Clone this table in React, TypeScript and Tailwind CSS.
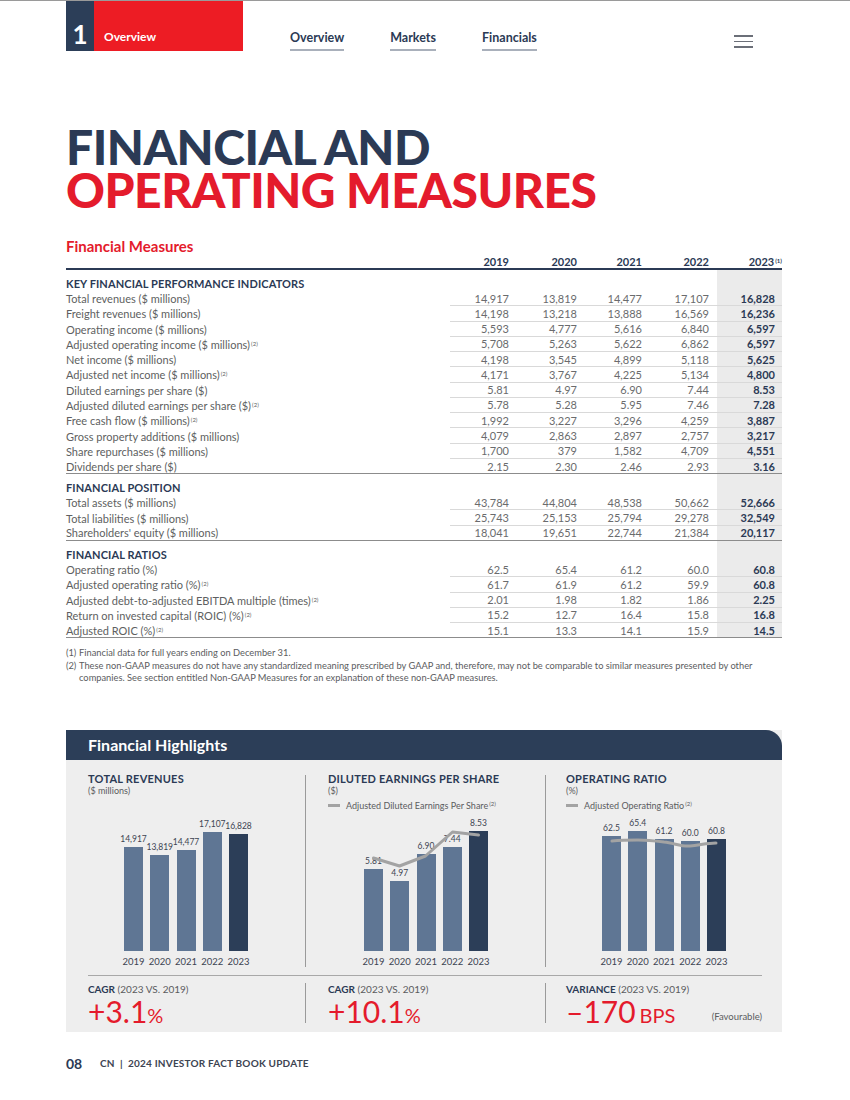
import React from 'react';

type Row = { label: string; note?: boolean; v: string[] };

const sections: { title: string; rows: Row[] }[] = [
  {
    title: 'KEY FINANCIAL PERFORMANCE INDICATORS',
    rows: [
      { label: 'Total revenues ($ millions)', v: ['14,917', '13,819', '14,477', '17,107', '16,828'] },
      { label: 'Freight revenues ($ millions)', v: ['14,198', '13,218', '13,888', '16,569', '16,236'] },
      { label: 'Operating income ($ millions)', v: ['5,593', '4,777', '5,616', '6,840', '6,597'] },
      { label: 'Adjusted operating income ($ millions)', note: true, v: ['5,708', '5,263', '5,622', '6,862', '6,597'] },
      { label: 'Net income ($ millions)', v: ['4,198', '3,545', '4,899', '5,118', '5,625'] },
      { label: 'Adjusted net income ($ millions)', note: true, v: ['4,171', '3,767', '4,225', '5,134', '4,800'] },
      { label: 'Diluted earnings per share ($)', v: ['5.81', '4.97', '6.90', '7.44', '8.53'] },
      { label: 'Adjusted diluted earnings per share ($)', note: true, v: ['5.78', '5.28', '5.95', '7.46', '7.28'] },
      { label: 'Free cash flow ($ millions)', note: true, v: ['1,992', '3,227', '3,296', '4,259', '3,887'] },
      { label: 'Gross property additions ($ millions)', v: ['4,079', '2,863', '2,897', '2,757', '3,217'] },
      { label: 'Share repurchases ($ millions)', v: ['1,700', '379', '1,582', '4,709', '4,551'] },
      { label: 'Dividends per share ($)', v: ['2.15', '2.30', '2.46', '2.93', '3.16'] },
    ],
  },
  {
    title: 'FINANCIAL POSITION',
    rows: [
      { label: 'Total assets ($ millions)', v: ['43,784', '44,804', '48,538', '50,662', '52,666'] },
      { label: 'Total liabilities ($ millions)', v: ['25,743', '25,153', '25,794', '29,278', '32,549'] },
      { label: "Shareholders' equity ($ millions)", v: ['18,041', '19,651', '22,744', '21,384', '20,117'] },
    ],
  },
  {
    title: 'FINANCIAL RATIOS',
    rows: [
      { label: 'Operating ratio (%)', v: ['62.5', '65.4', '61.2', '60.0', '60.8'] },
      { label: 'Adjusted operating ratio (%)', note: true, v: ['61.7', '61.9', '61.2', '59.9', '60.8'] },
      { label: 'Adjusted debt-to-adjusted EBITDA multiple (times)', note: true, v: ['2.01', '1.98', '1.82', '1.86', '2.25'] },
      { label: 'Return on invested capital (ROIC) (%)', note: true, v: ['15.2', '12.7', '16.4', '15.8', '16.8'] },
      { label: 'Adjusted ROIC (%)', note: true, v: ['15.1', '13.3', '14.1', '15.9', '14.5'] },
    ],
  },
];

const colWidths = ['w-[59px]', 'w-[68px]', 'w-[65px]', 'w-[67px]'];
const years = ['2019', '2020', '2021', '2022', '2023'];

const Sup = ({ n }: { n: string }) => (
  <sup className="ml-[1px] text-[6px]">({n})</sup>
);

const TableRow = ({ row, last }: { row: Row; last: boolean }) => (
  <div className={`flex h-[15.27px] items-center ${last ? 'border-b border-[#8c8c8c]' : ''}`}>
    <div className="w-[384px] shrink-0 text-[#5e5f61]">
      {row.label}
      {row.note && <Sup n="2" />}
    </div>
    <div className={`flex h-full flex-1 items-center ${last ? '' : 'border-b border-[#d9d9d9]'}`}>
      {row.v.slice(0, 4).map((x, i) => (
        <div key={i} className={`${colWidths[i]} text-right text-[#6a6b6d]`}>
          {x}
        </div>
      ))}
      <div className="ml-[8px] flex h-full w-[65px] items-center justify-end bg-[#ebebeb] pr-[7px] font-bold text-[#2b3a55]">
        {row.v[4]}
      </div>
    </div>
  </div>
);

type Bar = { label: string; h: number };

const BarChart = ({ bars, line }: { bars: Bar[]; line?: string }) => (
  <div className="mt-auto ml-[36px] w-[124px]">
    <div className="relative flex h-[130px] items-end gap-[7.25px]">
      {bars.map((b, i) => (
        <div key={i} className="flex w-[19px] flex-col items-center">
          <div className="mb-[2px] whitespace-nowrap text-[8.5px] leading-[11px] text-[#3d4452]">{b.label}</div>
          <div
            className={i === 4 ? 'w-[19px] bg-[#2c3e58]' : 'w-[19px] bg-[#5f7694]'}
            style={{ height: b.h }}
          />
        </div>
      ))}
      {line && (
        <svg className="absolute inset-0" width="124" height="130" viewBox="0 0 124 130">
          <path d={line} fill="none" stroke="#a3a3a3" strokeWidth="3" strokeLinejoin="round" strokeLinecap="round" />
        </svg>
      )}
    </div>
    <div className="mt-[5px] flex gap-[7.25px]">
      {years.map((y) => (
        <div key={y} className="flex w-[19px] justify-center text-[9.5px] leading-[11px] text-[#3d4452]">
          {y}
        </div>
      ))}
    </div>
  </div>
);

const rev = [14917, 13819, 14477, 17107, 16828];
const eps = [5.81, 4.97, 6.9, 7.44, 8.53];
const opr = [62.5, 65.4, 61.2, 60.0, 60.8];

const Legend = ({ text }: { text: string }) => (
  <div className="mt-[4px] flex items-center gap-[6px] text-[9px] leading-[10px] text-[#5b5c5e]">
    <span className="h-[3px] w-[12px] bg-[#a3a3a3]" />
    <span>
      {text}
      <Sup n="2" />
    </span>
  </div>
);

const ChartTitle = ({ title, unit }: { title: string; unit: string }) => (
  <div className="-mt-[3px]">
    <div className="text-[11px] font-bold leading-[13px] tracking-[0.02em] text-[#2b3a55]">{title}</div>
    <div className="text-[9px] leading-[12px] text-[#5b5c5e]">{unit}</div>
  </div>
);

const Stat = ({ head, rest, value, unit }: { head: string; rest: string; value: string; unit: string }) => (
  <div>
    <div className="text-[10px] leading-[12px] text-[#5b5c5e]">
      <span className="font-bold text-[#2b3a55]">{head}</span> {rest}
    </div>
    <div className="mt-[2px] text-[30px] leading-[28px] text-[#e41b2c]">
      {value}
      <span className={unit === '%' ? 'text-[20px]' : 'ml-[4px] text-[20px]'}>{unit}</span>
    </div>
  </div>
);

const App = () => {
  return (
    <div className="min-h-[1100px] w-[850px] border-t border-[#9a9a9a] bg-white font-['Lato',sans-serif]">
      {/* top bar */}
      <div className="flex h-[50px]">
        <div className="ml-[66px] flex">
          <div className="flex w-[28px] items-end justify-center bg-[#2c3e58] pb-[3px] text-[26px] font-bold leading-[28px] text-white">
            1
          </div>
          <div className="flex w-[149px] items-end bg-[#ed1c24] pb-[5px] pl-[10px] text-[12px] font-bold text-white">
            Overview
          </div>
        </div>
        <nav className="ml-[47px] flex items-end gap-[46px] text-[12.5px] font-bold text-[#2b3a55]">
          <span className="border-b-2 border-[#a9b0bb] pb-[1px]">Overview</span>
          <span className="border-b-2 border-[#a9b0bb] pb-[1px]">Markets</span>
          <span className="border-b-2 border-[#a9b0bb] pb-[1px]">Financials</span>
        </nav>
        <div className="ml-auto mr-[97px] flex flex-col gap-[4px] pt-[34px]">
          <span className="h-[1.5px] w-[19px] bg-[#6b6f78]" />
          <span className="h-[1.5px] w-[19px] bg-[#6b6f78]" />
          <span className="h-[1.5px] w-[19px] bg-[#6b6f78]" />
        </div>
      </div>

      <div className="mx-[66px] w-[716px]">
        {/* title */}
        <h1 className="mt-[74px] text-[48px] font-black leading-[43px] tracking-[-0.01em]">
          <span className="block text-[#2b3a55]">FINANCIAL AND</span>
          <span className="block text-[#e41b2c]">OPERATING MEASURES</span>
        </h1>

        {/* table */}
        <h2 className="mt-[27px] text-[15px] font-bold leading-[16px] text-[#e41b2c]">Financial Measures</h2>
        <div className="text-[11px] leading-[13px]">
          <div className="flex h-[16px] items-center border-b-2 border-[#2b3a55] font-bold text-[#2b3a55]">
            <div className="w-[384px] shrink-0" />
            {years.slice(0, 4).map((y, i) => (
              <div key={y} className={`${colWidths[i]} text-right`}>
                {y}
              </div>
            ))}
            <div className="ml-[8px] w-[65px] text-right">
              2023
              <Sup n="1" />
            </div>
          </div>
          {sections.map((s) => (
            <div key={s.title}>
              <div className="flex h-[21px] justify-between">
                <div className="flex items-end pb-[1px] font-bold tracking-[0.01em] text-[#2b3a55]">{s.title}</div>
                <div className="h-full w-[65px] bg-[#ebebeb]" />
              </div>
              {s.rows.map((r, i) => (
                <TableRow key={r.label} row={r} last={i === s.rows.length - 1} />
              ))}
            </div>
          ))}
        </div>

        {/* footnotes */}
        <div className="mt-[9px] text-[9.3px] leading-[12.5px] text-[#5b5c5e]">
          <div className="flex">
            <span className="w-[13px] shrink-0">(1)</span>
            <span>Financial data for full years ending on December 31.</span>
          </div>
          <div className="flex">
            <span className="w-[13px] shrink-0">(2)</span>
            <span className="whitespace-nowrap">
              These non-GAAP measures do not have any standardized meaning prescribed by GAAP and, therefore, may not be comparable to similar measures presented by other
              <br />
              companies. See section entitled Non-GAAP Measures for an explanation of these non-GAAP measures.
            </span>
          </div>
        </div>

        {/* highlights */}
        <div className="mt-[45px] bg-[#eeeeee]">
          <div className="flex h-[30px] items-center rounded-tr-[16px] bg-[#2c3e58] pl-[22px] text-[16px] font-bold text-white">
            Financial Highlights
          </div>
          <div className="flex pt-[15px] pb-[8px]">
            <div className="flex h-[192px] w-[239px] flex-col pl-[22px]">
              <ChartTitle title="TOTAL REVENUES" unit="($ millions)" />
              <BarChart bars={rev.map((v) => ({ label: v.toLocaleString('en-US'), h: (v / 17107) * 119 }))} />
            </div>
            <div className="flex h-[192px] w-[240px] flex-col border-l border-[#9a9a9a] pl-[22px]">
              <ChartTitle title="DILUTED EARNINGS PER SHARE" unit="($)" />
              <Legend text="Adjusted Diluted Earnings Per Share" />
              <BarChart
                bars={eps.map((v) => ({ label: v.toFixed(2), h: v * 14 }))}
                line="M9.5 37 L35.5 45 L61.5 35 L88.5 11 L114.5 14"
              />
            </div>
            <div className="flex h-[192px] flex-1 flex-col border-l border-[#9a9a9a] pl-[20px]">
              <ChartTitle title="OPERATING RATIO" unit="(%)" />
              <Legend text="Adjusted Operating Ratio" />
              <BarChart
                bars={opr.map((v) => ({ label: v.toFixed(1), h: v * 1.835 }))}
                line="M10 20 C20 19 28 19 36 19 C46 19 54 20 62 21 C72 22 80 26 88 25 C98 24 106 22 114 22"
              />
            </div>
          </div>
          <div className="ml-[22px] mr-[20px] border-t border-[#a8a8a8]" />
          <div className="flex pt-[7px] pb-[9px]">
            <div className="h-[40px] w-[239px] pl-[22px]">
              <Stat head="CAGR" rest="(2023 VS. 2019)" value="+3.1" unit="%" />
            </div>
            <div className="h-[40px] w-[240px] border-l border-[#9a9a9a] pl-[22px]">
              <Stat head="CAGR" rest="(2023 VS. 2019)" value="+10.1" unit="%" />
            </div>
            <div className="flex h-[40px] flex-1 justify-between border-l border-[#9a9a9a] pl-[20px] pr-[20px]">
              <Stat head="VARIANCE" rest="(2023 VS. 2019)" value="–170" unit="BPS" />
              <div className="self-end text-[9.5px] leading-[12px] text-[#5b5c5e]">(Favourable)</div>
            </div>
          </div>
        </div>

        {/* footer */}
        <div className="mt-[21px] flex items-center">
          <span className="w-[34px] text-[14px] font-bold text-[#2b3a55]">08</span>
          <span className="text-[10px] font-bold tracking-[0.02em] text-[#3d4452]">CN&nbsp;&nbsp;|&nbsp;&nbsp;2024 INVESTOR FACT BOOK UPDATE</span>
        </div>
      </div>
    </div>
  );
};

export default App;
